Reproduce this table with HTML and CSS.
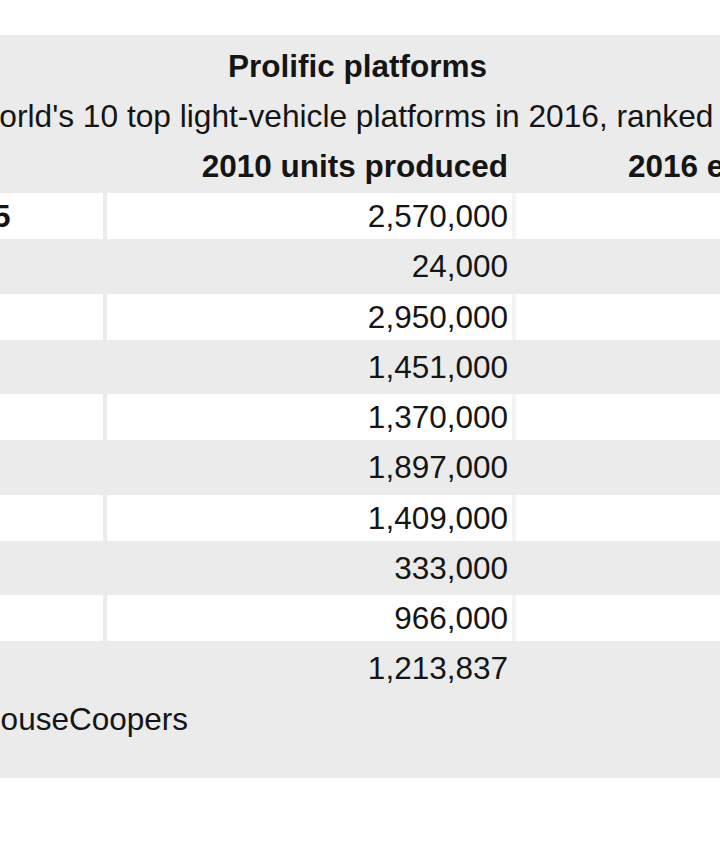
FILE: index.html
```html
<!DOCTYPE html>
<html lang="en">
<head>
<meta charset="utf-8">
<title>Prolific platforms</title>
<link rel="stylesheet" href="styles.css">
</head>
<body>
<div class="panel">
  <div class="title">Prolific platforms</div>
  <div class="subtitle">The world's 10 top light-vehicle platforms in 2016, ranked by size</div>
  <div class="table">
    <div class="row head">
      <div class="c a">Maker</div>
      <div class="c b"></div>
      <div class="c n">2010 units produced</div>
      <div class="c d">2016 estimated production</div>
    </div>
    <div class="row white">
      <div class="c a">Volkswagen</div>
      <div class="c b">PQ35</div>
      <div class="c n">2,570,000</div>
      <div class="c d">3,360,000</div>
    </div>
    <div class="row">
      <div class="c a">Volkswagen</div>
      <div class="c b">SK</div>
      <div class="c n">24,000</div>
      <div class="c d">3,240,000</div>
    </div>
    <div class="row white">
      <div class="c a">Toyota</div>
      <div class="c b">MC</div>
      <div class="c n">2,950,000</div>
      <div class="c d">3,150,000</div>
    </div>
    <div class="row">
      <div class="c a">Nissan</div>
      <div class="c b">B</div>
      <div class="c n">1,451,000</div>
      <div class="c d">2,880,000</div>
    </div>
    <div class="row white">
      <div class="c a">Ford</div>
      <div class="c b">C1</div>
      <div class="c n">1,370,000</div>
      <div class="c d">2,620,000</div>
    </div>
    <div class="row">
      <div class="c a">Toyota</div>
      <div class="c b">J1</div>
      <div class="c n">1,897,000</div>
      <div class="c d">2,410,000</div>
    </div>
    <div class="row white">
      <div class="c a">Hyundai</div>
      <div class="c b">K2</div>
      <div class="c n">1,409,000</div>
      <div class="c d">2,220,000</div>
    </div>
    <div class="row">
      <div class="c a">Renault</div>
      <div class="c b">G</div>
      <div class="c n">333,000</div>
      <div class="c d">2,050,000</div>
    </div>
    <div class="row white">
      <div class="c a">Honda</div>
      <div class="c b">V</div>
      <div class="c n">966,000</div>
      <div class="c d">1,930,000</div>
    </div>
    <div class="row">
      <div class="c a">Average</div>
      <div class="c b"></div>
      <div class="c n">1,213,837</div>
      <div class="c d">2,606,000</div>
    </div>
    <div class="source">Source: PricewaterhouseCoopers</div>
  </div>
</div>
</body>
</html>
```

FILE: styles.css
```css
body {
  margin: 0;
  background: #ffffff;
}

.panel {
  margin-top: 35px;
  height: 743px;
  box-sizing: border-box;
  padding-top: 6px;
  background: #ebebeb;
  overflow: hidden;
  font-family: "Liberation Sans", Arial, sans-serif;
  font-size: 31.5px;
  color: #151515;
}

.title {
  text-align: center;
  font-weight: bold;
  line-height: 50px;
  padding-right: 5px;
}

.subtitle {
  font-size: 31.7px;
  line-height: 50px;
  white-space: nowrap;
  margin-left: -87px;
}

.table {
  margin-left: -290px;
  width: max-content;
  display: flex;
  flex-direction: column;
  gap: 4.25px;
}

.row {
  display: grid;
  grid-template-columns: 209px 180px 405px 515px;
  column-gap: 4px;
  height: 46px;
  line-height: 46px;
}

.row.head {
  height: 47.75px;
  line-height: 50px;
  font-weight: bold;
}

.c {
  padding: 0 7px;
  white-space: nowrap;
  overflow: hidden;
}

.b {
  font-weight: bold;
}

.n,
.d {
  text-align: right;
  padding-right: 4px;
}

.row.white .c {
  background: #ffffff;
}

.row.white .d {
  box-shadow: -4px 0 0 #f4f4f4;
}

.source {
  line-height: 46px;
  padding-left: 7px;
  white-space: nowrap;
}
```
